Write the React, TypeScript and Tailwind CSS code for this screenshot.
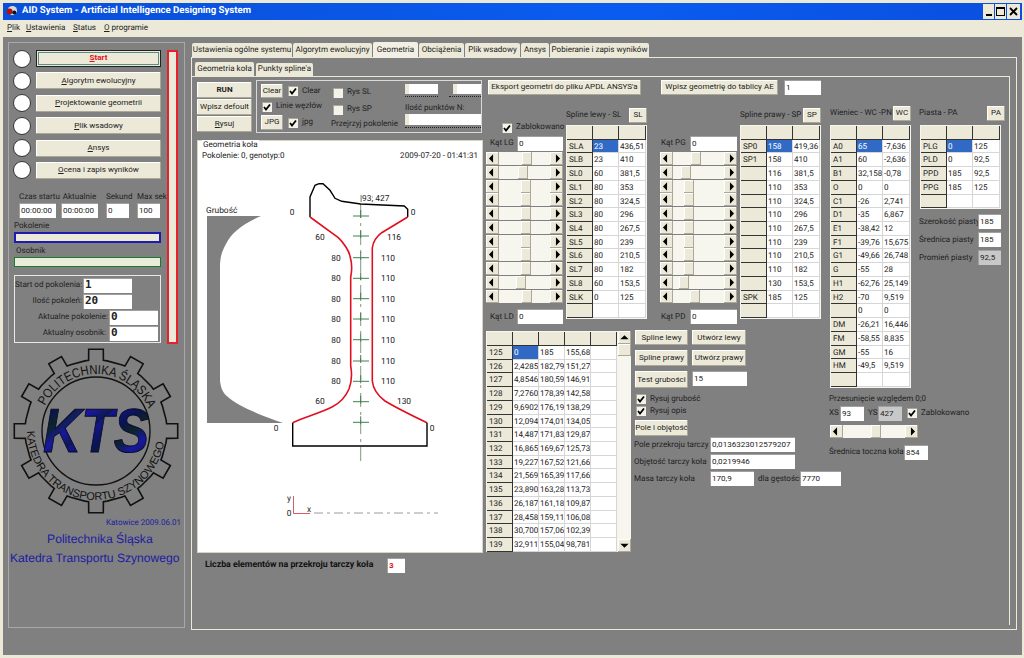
import React from 'react';

const bevel = 'bg-[#ece9d8] shadow-[inset_-1px_-1px_0_#aca899,inset_1px_1px_0_#fff]';

const Btn = ({ children, className = '' }: { children: React.ReactNode; className?: string }) => (
  <button className={`${bevel} flex items-center justify-center whitespace-nowrap leading-none text-[#222] ${className}`}>{children}</button>
);

const Input = ({ v, className = '' }: { v: string; className?: string }) => (
  <input
    readOnly
    value={v}
    className={`block bg-white shadow-[inset_1px_1px_0_#a0a0a0] px-[2px] text-[#222] outline-none ${className}`}
  />
);

const Check = ({ label, checked = true, className = '' }: { label?: string; checked?: boolean; className?: string }) => (
  <div className={`flex items-center gap-[4px] h-[11px] text-[#222] whitespace-nowrap ${className}`}>
    <span className="w-[10px] h-[10px] shrink-0 bg-[#f4f3ea] shadow-[inset_1px_1px_0_#aca899]">
      {checked && (
        <svg viewBox="0 0 10 10" className="w-[10px] h-[10px]">
          <path d="M2 5 L4 7.5 L8 2.5" fill="none" stroke="#000" strokeWidth="1.8" />
        </svg>
      )}
    </span>
    {label}
  </div>
);

const Arrow = ({ dir }: { dir: 'l' | 'r' | 'u' | 'd' }) => {
  const pts = { l: '6,2 6,9 2.5,5.5', r: '5,2 5,9 8.5,5.5', u: '2,7 9,7 5.5,3.5', d: '2,4 9,4 5.5,7.5' }[dir];
  return (
    <span className={`${bevel} w-[13px] h-[13px] shrink-0`}>
      <svg viewBox="0 0 11 11" className="w-[13px] h-[13px]">
        <polygon points={pts} fill="#000" />
      </svg>
    </span>
  );
};

const Scroll = ({ at, className = '' }: { at: number; className?: string }) => (
  <div className={`flex h-[13px] bg-[#f6f5ee] ${className}`}>
    <Arrow dir="l" />
    <div className="flex-1">
      <div className={`${bevel} w-[10px] h-[13px]`} style={{ marginLeft: at }} />
    </div>
    <Arrow dir="r" />
  </div>
);

const Track = ({ at, className = '', wide = false }: { at: number; className?: string; wide?: boolean }) => (
  <div className={className}>
    <div className={`flex ${wide ? 'h-[11px]' : 'h-[10px]'}`}>
      <div className="w-[4px] h-full bg-[#ece9d8]" style={{ marginLeft: at }} />
      <div className="flex-1 bg-white" />
    </div>
    <div className="mt-[2px] h-[2px] border-t border-dotted border-[#222]" />
  </div>
);

const Grid = ({ rows, cols, hi = -1, className = '' }: { rows: string[][]; cols: number; hi?: number; className?: string }) => {
  return (
    <div className={`bg-[#f6f5ee] p-[1px] grid auto-rows-[13.72px] ${className}`}>
      {Array.from({ length: cols }).map((_, i) => (
        <div key={i} className="bg-[#ece9d8] shadow-[inset_-1px_-1px_0_#333]" />
      ))}
      {rows.map((r, y) =>
        Array.from({ length: cols }).map((_, x) =>
          x === 0 ? (
            <div key={`${y}-${x}`} className="bg-[#ece9d8] shadow-[inset_-1px_-1px_0_#333] pl-[2px] leading-[13px] text-[#222] whitespace-nowrap overflow-hidden">
              {r[x]}
            </div>
          ) : (
            <div
              key={`${y}-${x}`}
              className={`${y === hi && x === 1 ? 'bg-[#316ac5] text-white' : 'bg-white text-[#222]'} border-r border-b border-[#d6d6d6] pl-[1px] leading-[13px] whitespace-nowrap overflow-hidden`}
            >
              {r[x]}
            </div>
          ),
        ),
      )}
    </div>
  );
};

const Lbl = ({ children, className = '' }: { children: React.ReactNode; className?: string }) => (
  <span className={`text-[#222] whitespace-nowrap ${className}`}>{children}</span>
);

const splineL = [
  ['SLA', '23', '436,51'], ['SLB', '23', '410'], ['SL0', '60', '381,5'], ['SL1', '80', '353'], ['SL2', '80', '324,5'], ['SL3', '80', '296'],
  ['SL4', '80', '267,5'], ['SL5', '80', '239'], ['SL6', '80', '210,5'], ['SL7', '80', '182'], ['SL8', '60', '153,5'], ['SLK', '0', '125'], ['', '', ''],
];
const splineP = [
  ['SP0', '158', '419,36'], ['SP1', '158', '410'], ['', '116', '381,5'], ['', '110', '353'], ['', '110', '324,5'], ['', '110', '296'],
  ['', '110', '267,5'], ['', '110', '239'], ['', '110', '210,5'], ['', '110', '182'], ['', '130', '153,5'], ['SPK', '185', '125'], ['', '', ''],
];
const wieniec = [
  ['A0', '65', '-7,636'], ['A1', '60', '-2,636'], ['B1', '32,158', '-0,78'], ['O', '0', '0'], ['C1', '-26', '2,741'], ['D1', '-35', '6,867'],
  ['E1', '-38,42', '12'], ['F1', '-39,76', '15,675'], ['G1', '-49,66', '26,748'], ['G', '-55', '28'], ['H1', '-62,76', '25,149'], ['H2', '-70', '9,519'],
  ['', '0', '0'], ['DM', '-26,21', '16,446'], ['FM', '-58,55', '8,835'], ['GM', '-55', '16'], ['HM', '-49,5', '9,519'], ['', '', ''],
];
const piasta = [['PLG', '0', '125'], ['PLD', '0', '92,5'], ['PPD', '185', '92,5'], ['PPG', '185', '125'], ['', '', '']];
const nodes = [
  ['125', '0', '185', '155,68'], ['126', '2,4285', '182,79', '151,27'], ['127', '4,8546', '180,59', '146,91'], ['128', '7,2760', '178,39', '142,58'],
  ['129', '9,6902', '176,19', '138,29'], ['130', '12,094', '174,01', '134,05'], ['131', '14,487', '171,83', '129,87'], ['132', '16,865', '169,67', '125,73'],
  ['133', '19,227', '167,52', '121,66'], ['134', '21,569', '165,39', '117,66'], ['135', '23,890', '163,28', '113,73'], ['136', '26,187', '161,18', '109,87'],
  ['137', '28,458', '159,11', '106,08'], ['138', '30,700', '157,06', '102,39'], ['139', '32,911', '155,04', '98,781'],
];

const leftScroll = [23, 19, 22, 22, 22, 22, 22, 22, 22, 17, 23];
const rightScroll = [18, 8, 11, 11, 11, 11, 11, 11, 11, 6, 17];

const Logo = () => {
  const cx = 84;
  const cy = 84;
  const teeth = 12;
  let gear = '';
  for (let i = 0; i < teeth; i++) {
    const a = (i * 2 * Math.PI) / teeth - Math.PI / 2;
    const st = (2 * Math.PI) / teeth;
    const pts: [number, number][] = [
      [71, a - st * 0.3],
      [71, a - st * 0.2],
      [82, a - st * 0.17],
      [82, a + st * 0.17],
      [71, a + st * 0.2],
      [71, a + st * 0.3],
    ];
    pts.forEach(([r, t]) => {
      gear += `${gear ? 'L' : 'M'}${(cx + r * Math.cos(t)).toFixed(1)} ${(cy + r * Math.sin(t)).toFixed(1)} `;
    });
  }
  gear += 'Z';
  return (
    <svg viewBox="0 0 168 168" className="w-[168px] h-[168px] block">
      <defs>
        <path id="arcTop" d="M 27 84 A 57 57 0 0 1 141 84" fill="none" />
        <path id="arcBot" d="M 15 84 A 69 69 0 0 0 153 84" fill="none" />
        <linearGradient id="kts" x1="0" y1="0" x2="0.5" y2="0.4" spreadMethod="repeat">
          <stop offset="0" stopColor="#14148c" />
          <stop offset="0.3" stopColor="#0a1450" />
          <stop offset="0.5" stopColor="#0c2424" />
          <stop offset="0.75" stopColor="#1818a0" />
          <stop offset="1" stopColor="#0c1848" />
        </linearGradient>
      </defs>
      <path d={gear} fill="none" stroke="#111" strokeWidth="1.6" />
      <circle cx={cx} cy={cy} r="54" fill="none" stroke="#111" strokeWidth="1.4" />
      <text fontSize="13" fill="#111" fontFamily="'Liberation Sans',sans-serif">
        <textPath href="#arcTop" startOffset="26" textLength="130" lengthAdjust="spacingAndGlyphs">POLITECHNIKA ŚLĄSKA</textPath>
      </text>
      <text fontSize="11" fill="#111" fontFamily="'Liberation Sans',sans-serif">
        <textPath href="#arcBot" startOffset="0" textLength="205" lengthAdjust="spacingAndGlyphs">KATEDRA TRANSPORTU SZYNOWEGO</textPath>
      </text>
      <text
        x="84"
        y="105"
        textAnchor="middle"
        fontSize="62"
        fontWeight="700"
        fontStyle="italic"
        fontFamily="'Liberation Sans',sans-serif"
        fill="url(#kts)"
        stroke="#0a0a30"
        strokeWidth="1"
        textLength="106"
        lengthAdjust="spacingAndGlyphs"
      >
        KTS
      </text>
    </svg>
  );
};

const crosses = [215, 235, 256.7, 277.3, 297.7, 318, 338.7, 360, 380.3, 400.7, 421.3];
const numbers: [number, number, string][] = [
  [292, 214, '0'], [320, 239, '60'], [336, 259.5, '80'], [336, 280, '80'], [336, 301, '80'], [336, 321, '80'], [336, 342, '80'], [336, 363, '80'], [336, 383, '80'], [320, 403, '60'], [276, 430, '0'],
  [413, 214, '0'], [394, 239, '116'], [388, 259.5, '110'], [388, 280, '110'], [388, 301, '110'], [388, 321, '110'], [388, 342, '110'], [388, 363, '110'], [388, 383, '110'], [404, 403, '130'], [432, 430, '0'],
];

const WheelChart = () => (
  <svg viewBox="197 160 284 390" className="w-[284px] h-[390px] block" fontFamily="Roboto,sans-serif" fontSize="8.4" fill="#222">
    <path d="M207 215 L261 215 C244 222 231 232 226 243 C222 250 220 256 220 266 L220 380 C221 388 223 392 228 396 C238 405 262 415 283 422 L207 422 Z" fill="#808080" />
    <text x="206" y="212">Grubość</text>
    <line x1="360.7" y1="203" x2="360.7" y2="462" stroke="#7f9a7f" strokeWidth="1" strokeDasharray="14 5 3 5" />
    {crosses.map((y) => (
      <path key={y} d={`M353 ${y} H369 M360.7 ${y - 6} V${y + 2}`} stroke="#3f7f4f" strokeWidth="1" fill="none" />
    ))}
    <path d="M310 216 V196 L315 184.3 L319 182.7 H323 L330 189.3 L335 197.3 L341.7 200.3 L360.7 203 L404.3 205 L407.7 208.3 V216" fill="none" stroke="#000" strokeWidth="1.4" />
    <path d="M310 216 L338.3 236.7 C344 242 349 250 350 255 C352 262 352 270 350.7 276 V365 C352 372 352 380 349 388 C346 395 340 402 332 406 C320 412 305 416 292.7 421.7" fill="none" stroke="#e01020" strokeWidth="1.6" />
    <path d="M407.7 216 L381.7 231.7 C376 236 373 241 372.3 247 V380 C373 387 377 394 385 400 C395 406 415 416 427 421.7" fill="none" stroke="#e01020" strokeWidth="1.6" />
    <path d="M292.7 421.7 V445 H427 V421.7" fill="none" stroke="#000" strokeWidth="1.4" />
    <text x="360" y="200">|93; 427</text>
    {numbers.map(([x, y, t], i) => (
      <text key={i} x={x} y={y} textAnchor="middle">{t}</text>
    ))}
    <path d="M293.5 495 V512.5 H310" fill="none" stroke="#d03040" strokeWidth="0.8" />
    <line x1="314" y1="512" x2="438" y2="512" stroke="#9a9a9a" strokeWidth="1" strokeDasharray="9 4 3 4" />
    <text x="289" y="500" textAnchor="middle">y</text>
    <text x="289" y="515" textAnchor="middle">0</text>
    <text x="309" y="511" textAnchor="middle">x</text>
  </svg>
);

const mainTabs: [string, string, boolean?][] = [
  ['Ustawienia ogólne systemu', 'w-[100px]'],
  ['Algorytm ewolucyjny', 'w-[79px]'],
  ['Geometria', 'w-[45px]', true],
  ['Obciążenia', 'w-[45px]'],
  ['Plik wsadowy', 'w-[55px]'],
  ['Ansys', 'w-[28px]'],
  ['Pobieranie i zapis wyników', 'w-[99px]'],
];

const sideButtons: [string, string][] = [
  ['A', 'lgorytm ewolucyjny'],
  ['P', 'rojektowanie geometrii'],
  ['P', 'lik wsadowy'],
  ['A', 'nsys'],
  ['O', 'cena i zapis wyników'],
];

const boldValue = "font-bold text-[11px] font-['DejaVu_Sans_Mono',monospace]";

const SidePanel = () => (
  <div className="w-[177px] h-[586px] shrink-0 mt-[5px] ml-[5px] border border-[#a8a8a8] pt-[7px] pl-[4px]">
    <div className="flex gap-[6px]">
      <div className="w-[148px]">
        <div className="flex flex-col gap-[5.4px]">
          <div className="flex gap-[5px] items-center h-[17px]">
            <span className="w-[18px] h-[18px] rounded-full bg-white border border-[#333] shrink-0" />
            <button className="w-[125px] h-[17px] bg-[#ece9d8] border border-[#222] flex items-center justify-center">
              <span className="w-[121px] h-[13px] border border-[#5a8f86] flex items-center justify-center font-bold text-[#e01020] leading-none">
                <u>S</u>tart
              </span>
            </button>
          </div>
          {sideButtons.map(([k, rest], i) => (
            <div key={i} className="flex gap-[5px] items-center h-[17px]">
              <span className="w-[18px] h-[18px] rounded-full bg-white border border-[#333] shrink-0" />
              <Btn className="w-[125px] h-[17px]">
                <u>{k}</u>
                {rest}
              </Btn>
            </div>
          ))}
        </div>
        <div className="flex mt-[12px] ml-[6px]">
          <div className="w-[37px] text-center"><Lbl>Czas startu</Lbl><Input v="00:00:00" className="w-[37px] h-[15px]" /></div>
          <div className="w-[37px] ml-[5px] text-center"><Lbl>Aktualnie</Lbl><Input v="00:00:00" className="w-[37px] h-[15px]" /></div>
          <div className="w-[23px] ml-[8px] text-center"><Lbl>Sekund</Lbl><Input v="0" className="w-[23px] h-[15px]" /></div>
          <div className="w-[23px] ml-[8px] text-center"><Lbl>Max sek</Lbl><Input v="100" className="w-[23px] h-[15px]" /></div>
        </div>
        <div className="mt-[2px] ml-[1px] leading-[12px]"><Lbl>Pokolenie</Lbl></div>
        <div className="h-[11px] w-[147px] ml-[1px] bg-[#ece9d8] border-2 border-[#1c1cb0]" />
        <div className="mt-[2px] ml-[3px] leading-[12px]"><Lbl>Osobnik</Lbl></div>
        <div className="h-[10px] w-[147px] ml-[1px] bg-[#e8ecd8] border border-[#1c7a2c]" />
        <div className="mt-[8px] ml-[1px] w-[147px] h-[68px] border border-[#e8e8e8] pt-[2px] flex flex-col gap-[1px]">
          <div className="flex items-center"><span className="w-[67px] text-right text-[#222] whitespace-nowrap">Start od pokolenia:</span><Input v="1" className={`w-[49px] h-[15px] ml-[1px] ${boldValue}`} /></div>
          <div className="flex items-center"><span className="w-[67px] text-right text-[#222] whitespace-nowrap">Ilość pokoleń:</span><Input v="20" className={`w-[49px] h-[15px] ml-[1px] ${boldValue}`} /></div>
          <div className="flex items-center"><span className="w-[93px] text-right text-[#222] whitespace-nowrap">Aktualne pokolenie:</span><Input v="0" className={`w-[49px] h-[15px] ml-[1px] ${boldValue}`} /></div>
          <div className="flex items-center"><span className="w-[91px] text-right text-[#222] whitespace-nowrap">Aktualny osobnik:</span><Input v="0" className={`w-[49px] h-[15px] ml-[3px] ${boldValue}`} /></div>
        </div>
      </div>
      <div className="w-[11px] h-[294px] bg-[#ece9d8] border-2 border-[#e8202c]" />
    </div>
    <div className="mt-[3px] -ml-[1px]"><Logo /></div>
    <div className="text-[#1c1ca0] mt-[2px] w-[168px] text-right leading-[12px] text-[8px]">Katowice 2009.06.01</div>
    <div className="text-[#1c1ca0] mt-[1px] ml-[34px] leading-[18px] text-[12.2px] whitespace-nowrap font-['Liberation_Sans',Arial,sans-serif]">Politechnika Śląska</div>
    <div className="text-[#1c1ca0] mt-[1px] -ml-[3px] leading-[18px] text-[12.1px] whitespace-nowrap font-['Liberation_Sans',Arial,sans-serif]">Katedra Transportu Szynowego</div>
  </div>
);

const Toolbar = () => (
  <div className="flex gap-[4px]">
    <div className="w-[55px] pt-[2px] flex flex-col gap-[1px]">
      <Btn className="w-[55px] h-[16px] font-bold">RUN</Btn>
      <Btn className="w-[55px] h-[16px]">Wpisz defoult</Btn>
      <Btn className="w-[55px] h-[16px]"><span><u>R</u>ysuj</span></Btn>
    </div>
    <div className="w-[226px] h-[53px] border border-[#d8d8d8] pt-[3px] pl-[4px] flex">
      <div className="w-[72px]">
        <div className="flex items-center gap-[5px]">
          <Btn className="w-[22px] h-[14px]">Clear</Btn>
          <Check label="Clear" />
        </div>
        <Check label="Linie węzłów" className="mt-[3px] ml-[1px]" />
        <div className="flex items-center gap-[5px] mt-[3px]">
          <Btn className="w-[22px] h-[15px]">JPG</Btn>
          <Check label="jpg" />
        </div>
      </div>
      <div className="w-[72px]">
        <Check label="Rys SL" checked={false} className="mt-[3px]" />
        <Check label="Rys SP" checked={false} className="mt-[6px]" />
        <Lbl className="block -ml-[2px] mt-[3px] leading-[12px]">Przejrzyj pokolenie</Lbl>
      </div>
      <div className="w-[76px]">
        <div className="flex gap-[11px]">
          <Track at={0} className="w-[33px]" />
          <Track at={4} className="w-[32px]" />
        </div>
        <Lbl className="block mt-[4px] leading-[11px]">Ilość punktów N:</Lbl>
        <Track at={0} wide className="w-[76px] mt-[1px]" />
      </div>
    </div>
  </div>
);

const Column = ({ top, bottom, at, lblTop, lblBottom, inputMl }: { top: string; bottom: string; at: number[]; lblTop: string; lblBottom: string; inputMl: string }) => (
  <div className="w-[77px]">
    <div className="flex items-center h-[15px]"><Lbl className={lblTop}>{top}</Lbl><Input v="0" className={`h-[15px] ${inputMl}`} /></div>
    <div className="grid auto-rows-[13.75px] mt-[1px]">
      {at.map((a, i) => <Scroll key={i} at={a} />)}
    </div>
    <div className="flex items-center h-[15px] mt-[6px]"><Lbl className={lblBottom}>{bottom}</Lbl><Input v="0" className={`h-[15px] ${inputMl}`} /></div>
  </div>
);

const Titled = ({ title, tag, className = '' }: { title: string; tag: string; className?: string }) => (
  <div className={`flex items-center h-[15px] justify-between ${className}`}>
    <Lbl>{title}</Lbl>
    <Btn className="w-[18px] h-[15px]">{tag}</Btn>
  </div>
);

const Form = () => (
  <div className="-mt-[1px]">
    <div className="flex gap-[4px]">
      <Btn className="w-[53px] h-[15px]">Spline lewy</Btn>
      <Btn className="w-[54px] h-[15px]">Utwórz lewy</Btn>
    </div>
    <div className="flex gap-[4px] mt-[5px]">
      <Btn className="w-[53px] h-[16px]">Spline prawy</Btn>
      <Btn className="w-[54px] h-[16px]">Utwórz prawy</Btn>
    </div>
    <div className="flex gap-[4px] mt-[5px]">
      <Btn className="w-[53px] h-[17px]">Test grubości</Btn>
      <Input v="15" className="w-[55px] h-[15px]" />
    </div>
    <Check label="Rysuj grubość" className="mt-[5px] ml-[1px]" />
    <Check label="Rysuj opis" className="mt-[1px] ml-[1px]" />
    <Btn className="w-[53px] h-[16px] mt-[4px]">Pole i objętość</Btn>
    <div className="flex items-center mt-[1px]"><Lbl className="w-[75px] -ml-[1px]">Pole przekroju tarczy</Lbl><Input v="0,0136323012579207" className="w-[85px] h-[15px] ml-[1px]" /></div>
    <div className="flex items-center mt-[2px]"><Lbl className="w-[75px] -ml-[1px]">Objętość tarczy koła</Lbl><Input v="0,0219946" className="w-[85px] h-[15px] ml-[1px]" /></div>
    <div className="flex items-center mt-[2px]">
      <Lbl className="w-[75px] -ml-[1px]">Masa tarczy koła</Lbl>
      <Input v="170,9" className="w-[44px] h-[15px] ml-[1px]" />
      <Lbl className="ml-[4px] w-[42px]">dla gęstości</Lbl>
      <Input v="7770" className="w-[41px] h-[15px]" />
    </div>
  </div>
);

const VerticalBar = () => (
  <div className="w-[13px] h-[221px] flex flex-col bg-[#f6f5ee]">
    <Arrow dir="u" />
    <div className={`${bevel} w-[13px] h-[12px]`} />
    <div className="flex-1" />
    <Arrow dir="d" />
  </div>
);

const GeometryPage = () => (
  <div className="flex gap-[3px] pl-[4px] pt-[3px]">
    <div className="w-[286px]">
      <Toolbar />
      <div className="relative mt-[7px] w-[286px] h-[413px] bg-white shadow-[inset_0_0_0_1px_#d8d4c4]">
        <span className="absolute left-[5px] top-[0px] bg-white px-[1px] text-[#222] leading-[10px]">Geometria koła</span>
        <div className="flex justify-between px-[5px] pt-[11px] h-[21px] text-[#222] leading-[10px]">
          <span>Pokolenie: 0, genotyp:0</span>
          <span>2009-07-20 - 01:41:31</span>
        </div>
        <WheelChart />
      </div>
      <div className="flex items-center mt-[5px] ml-[8px]">
        <span className="font-bold text-[#111] text-[8.8px] whitespace-nowrap w-[182px]">Liczba elementów na przekroju tarczy koła</span>
        <Input v="3" className="w-[18px] h-[15px] font-bold text-[#e01020]" />
      </div>
    </div>
    <div>
      <div className="flex">
        <Btn className="w-[153px] h-[15px] ml-[2px]">Eksport geometri do pliku APDL ANSYS'a</Btn>
        <Btn className="w-[117px] h-[15px] ml-[20px]">Wpisz geometrię do tablicy AE</Btn>
        <Input v="1" className="w-[37px] h-[15px] ml-[6px]" />
      </div>
      <div className="flex">
        <div className="w-[335px] pt-[13px]">
          <div className="flex">
            <div className="w-[77px] pt-[14px]">
              <Check label="Zablokowano" className="ml-[16px] mb-[3px]" />
              <Column top="Kąt LG" bottom="Kąt LD" at={leftScroll} lblTop="w-[31px] pl-[4px]" lblBottom="w-[31px] pl-[4px]" inputMl="w-[46px]" />
            </div>
            <div className="w-[81px] ml-[3px]">
              <Titled title="Spline lewy - SL" tag="SL" />
              <Grid rows={splineL} cols={3} hi={0} className="mt-[2px] w-[81px] grid-cols-[26px_26px_27px]" />
            </div>
            <div className="w-[77px] ml-[13px] pt-[28px]">
              <Column top="Kąt PG" bottom="Kąt PD" at={rightScroll} lblTop="w-[30px] pl-[1px]" lblBottom="w-[30px] pl-[1px]" inputMl="w-[47px]" />
            </div>
            <div className="w-[81px] ml-[3px]">
              <Titled title="Spline prawy - SP" tag="SP" />
              <Grid rows={splineP} cols={3} hi={0} className="mt-[2px] w-[81px] grid-cols-[26px_26px_27px]" />
            </div>
          </div>
          <div className="flex mt-[7px]">
            <div className="flex w-[145px]">
              <Grid rows={nodes.map((r) => [...r, ''])} cols={5} hi={0} className="w-[132px] h-[221px] grid-cols-[26px_26px_26px_26px_26px]" />
              <VerticalBar />
            </div>
            <div className="ml-[4px]"><Form /></div>
          </div>
        </div>
        <div className="ml-[8px] pt-[11px] w-[178px]">
          <div className="flex">
            <div className="w-[81px] ml-[1px]">
              <Titled title="Wieniec - WC -PN" tag="WC" />
              <Grid rows={wieniec} cols={3} hi={0} className="mt-[4px] w-[81px] grid-cols-[26px_26px_27px]" />
            </div>
            <div className="w-[86px] ml-[8px]">
              <Titled title="Piasta - PA" tag="PA" />
              <Grid rows={piasta} cols={3} hi={0} className="mt-[4px] ml-[1px] w-[81px] grid-cols-[26px_26px_27px]" />
              <div className="flex items-center mt-[5px]"><Lbl className="w-[59px]">Szerokość piasty</Lbl><Input v="185" className="w-[23px] h-[15px]" /></div>
              <div className="flex items-center mt-[3px]"><Lbl className="w-[59px]">Średnica piasty</Lbl><Input v="185" className="w-[23px] h-[15px]" /></div>
              <div className="flex items-center mt-[3px]"><Lbl className="w-[59px]">Promień piasty</Lbl><Input v="92,5" className="w-[23px] h-[15px] !bg-[#c8c8c8]" /></div>
            </div>
          </div>
          <div className="mt-[5px] leading-[11px]"><Lbl>Przesunięcie względem 0;0</Lbl></div>
          <div className="flex items-center mt-[2px]">
            <Lbl className="w-[11px]">XS</Lbl>
            <Input v="93" className="w-[24px] h-[15px]" />
            <Lbl className="ml-[4px] w-[10px]">YS</Lbl>
            <Input v="427" className="w-[24px] h-[15px] !bg-[#c8c8c8]" />
            <Check label="Zablokowano" className="ml-[5px]" />
          </div>
          <Scroll at={28} className="w-[88px] ml-[1px] mt-[4px]" />
          <div className="flex items-center mt-[7px]"><Lbl className="w-[75px]">Średnica toczna koła</Lbl><Input v="854" className="w-[24px] h-[15px]" /></div>
        </div>
      </div>
    </div>
  </div>
);

export default function App() {
  return (
    <div className="w-[1024px] h-[658px] overflow-hidden bg-[#ece9d8] pt-[3px] pl-[3px] pr-[2px] font-['Roboto',Arial,sans-serif] text-[8.05px] [text-rendering:geometricPrecision]">
      <div className="h-[17px] flex items-center bg-[linear-gradient(90deg,#0a4fd8,#0a5cf0_60%,#0a4fe0)] pl-[2px] pr-[2px]">
        <svg viewBox="0 0 14 14" className="w-[13px] h-[13px]">
          <circle cx="8" cy="6" r="5" fill="#d8d8d8" />
          <circle cx="5" cy="7" r="3.2" fill="#b01010" />
          <circle cx="10" cy="8" r="2.2" fill="#101020" />
        </svg>
        <span className="ml-[4px] text-white font-bold text-[9.6px] whitespace-nowrap">AID System - Artificial Intelligence Designing System</span>
        <div className="ml-auto flex gap-[1px]">
          <button className="w-[11px] h-[15px] bg-[#ece9d8] flex items-end justify-center pb-[3px]"><span className="w-[6px] h-[2px] bg-black" /></button>
          <button className="w-[11px] h-[15px] bg-[#ece9d8] flex items-center justify-center"><span className="w-[9px] h-[9px] border border-black border-t-2" /></button>
          <button className="w-[13px] h-[15px] bg-[#ece9d8] flex items-center justify-center">
            <svg viewBox="0 0 9 9" className="w-[9px] h-[9px]"><path d="M1 1 L8 8 M8 1 L1 8" stroke="#000" strokeWidth="1.8" /></svg>
          </button>
        </div>
      </div>
      <div className="h-[17px] flex items-center text-[#222] pl-[4px]">
        <span className="w-[19px]"><u>P</u>lik</span>
        <span className="w-[47px]"><u>U</u>stawienia</span>
        <span className="w-[31px]"><u>S</u>tatus</span>
        <span><u>O</u> programie</span>
      </div>
      <div className="h-[618px] bg-[#808080] flex">
        <SidePanel />
        <div className="ml-[6px] w-[826px] pt-[6px]">
          <div className="flex h-[14px] pl-[1px] gap-[1px]">
            {mainTabs.map(([t, w, active]) => (
              <div
                key={t}
                className={`${w} flex items-center justify-center bg-[#ece9d8] text-[#222] whitespace-nowrap rounded-t-[2px] ${active ? 'h-[16px] -mt-[1px] relative z-10 bg-[#f2f0e4]' : 'h-[14px]'}`}
              >
                {t}
              </div>
            ))}
          </div>
          <div className="h-[573px] border border-[#ece9d8] pt-[4px] pr-[6px]">
            <div className="flex h-[14px] pl-[3px] gap-[2px]">
              <div className="w-[59px] h-[15px] flex items-center justify-center bg-[#ece9d8] text-[#222] rounded-t-[2px] relative z-10">Geometria koła</div>
              <div className="w-[57px] h-[13px] mt-[1px] flex items-center justify-center bg-[#ece9d8] text-[#222] rounded-t-[2px]">Punkty spline'a</div>
            </div>
            <div className="h-[549px] border-t border-r border-[#ece9d8] pl-[1px]">
              <GeometryPage />
            </div>
          </div>
        </div>
      </div>
    </div>
  );
}
